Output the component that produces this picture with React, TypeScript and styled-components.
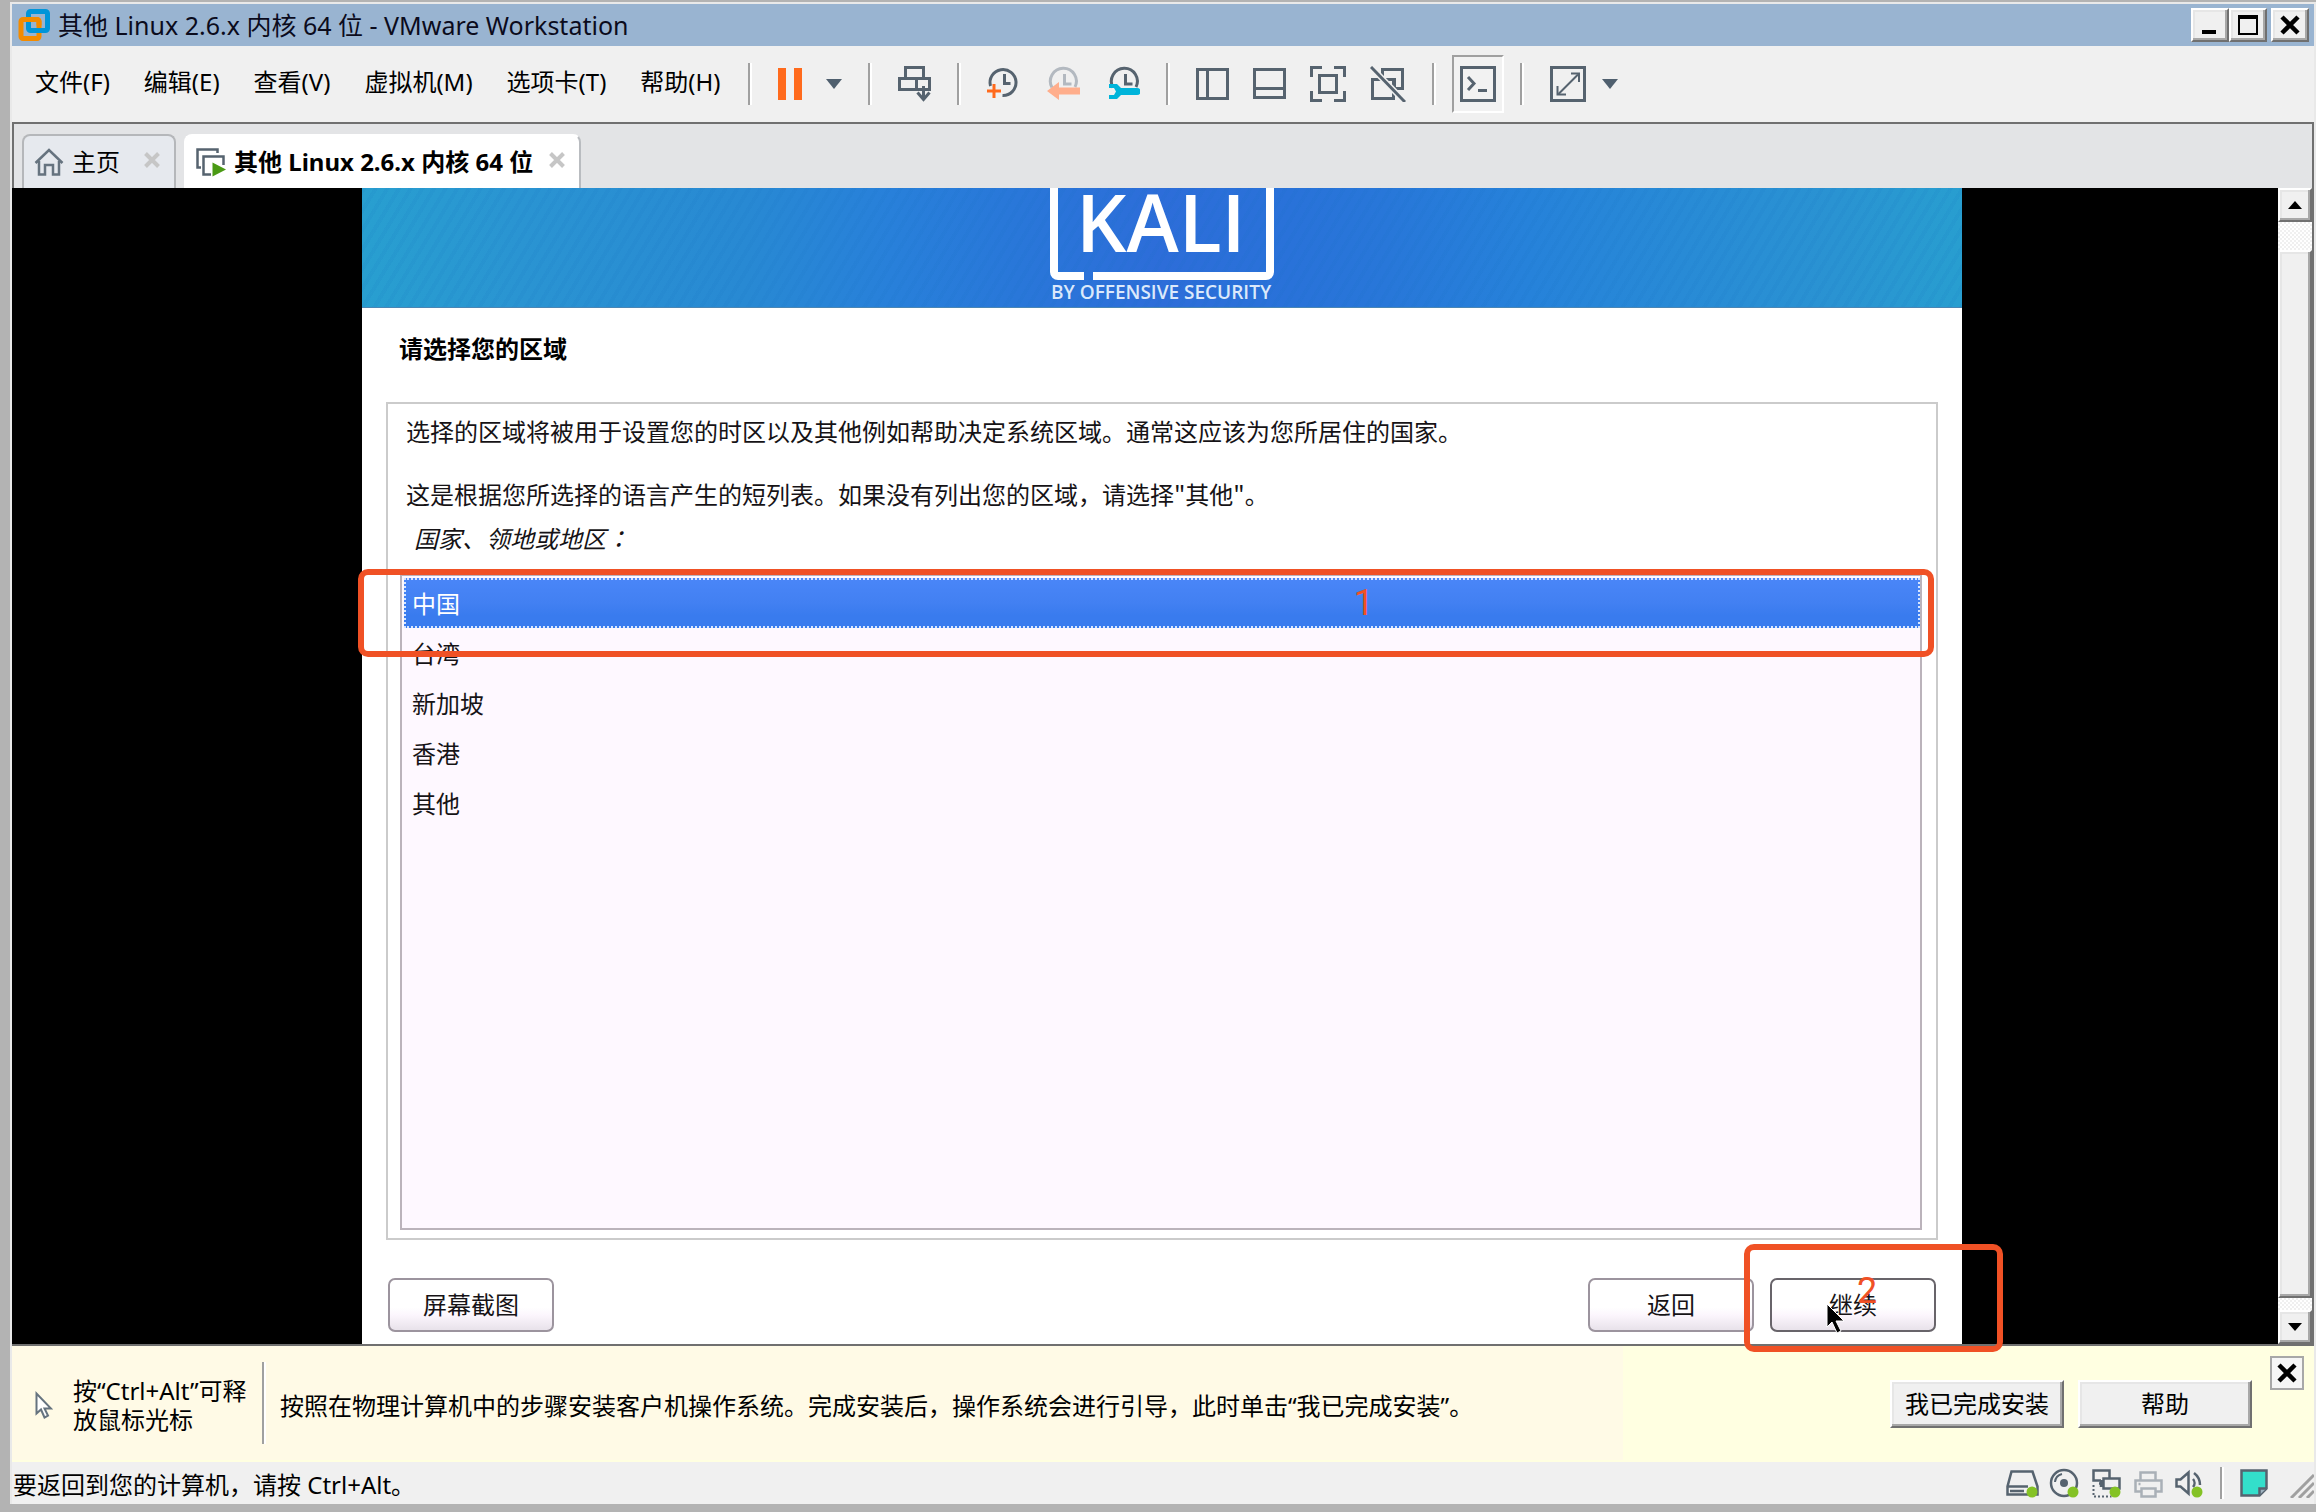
import React, { useState } from 'react';
import styled, { createGlobalStyle, css } from 'styled-components';

const ui = `"Noto Sans", "Noto Sans CJK SC", sans-serif`;
const cjk = `"Noto Sans CJK SC", "Noto Sans", sans-serif`;

const Global = createGlobalStyle`
  * { box-sizing: border-box; }
  html, body { margin: 0; padding: 0; }
  body { background: #b3b3b3; font-family: ${ui}; font-size: 24px; color: #000; }
  button { font: inherit; color: inherit; cursor: default; }
`;

const raised = css`
  background: #f0f0f0;
  border: 2px solid;
  border-color: #fff #707070 #707070 #fff;
  box-shadow: inset -2px -2px 0 #a8a8a8, inset 2px 2px 0 #e6e6e6;
`;

const Desktop = styled.div`
  min-height: 100vh;
  display: flex;
  flex-direction: column;
  padding: 2px 0 8px 10px;
  background: #b3b3b3;
`;

const Window = styled.div`
  flex: 1;
  display: flex;
  flex-direction: column;
  background: #f0f0f0;
  border: 2px solid #e9e9e9;
  border-bottom: 0;
`;

/* ---- title bar ---- */

const TitleBar = styled.header`
  height: 42px;
  display: flex;
  align-items: center;
  gap: 7px;
  padding: 0 5px 0 5px;
  background: #99b4d1;
`;

const TitleText = styled.h1`
  flex: 1;
  margin: 0;
  font-size: 25px;
  font-weight: 400;
  line-height: 32px;
  color: #0b0b1c;
`;

const WindowButtons = styled.div`
  display: flex;
`;

const WindowButton = styled.button<{ $apart?: boolean }>`
  ${raised}
  width: 38px;
  height: 34px;
  padding: 0;
  margin-left: ${p => (p.$apart ? '4px' : '0')};
  display: flex;
  align-items: center;
  justify-content: center;
`;

/* ---- menu and tool bar ---- */

const MenuBar = styled.div`
  height: 76px;
  display: flex;
  align-items: center;
  padding-left: 6px;
`;

const MenuItem = styled.button`
  padding: 0 17px 4px;
  border: 0;
  background: none;
  line-height: 32px;
  white-space: nowrap;
`;

const Tools = styled.div`
  display: flex;
  align-items: center;
  padding-left: 10px;
`;

const Separator = styled.span<{ $height: number }>`
  width: 4px;
  height: ${p => p.$height}px;
  flex: none;
  background: linear-gradient(90deg, #a0a0a0 50%, #fff 50%);
`;

const ToolGroup = styled.div<{ $gap?: number }>`
  display: flex;
  align-items: center;
  gap: ${p => p.$gap ?? 24}px;
  padding: 0 26px;
`;

const IconButton = styled.button<{ $on?: boolean }>`
  display: flex;
  padding: 0;
  border: 0;
  background: none;
  ${p =>
    p.$on &&
    css`
      margin: 0 -10px;
      padding: 9px 6px;
      border: 2px solid;
      border-color: #a0a0a0 #fff #fff #a0a0a0;
      background: #f2f2f2;
    `}
`;

/* ---- tabs ---- */

const Client = styled.div`
  flex: 1;
  display: flex;
  flex-direction: column;
  border: 2px solid #707070;
  border-width: 2px 2px 2px 0;
`;

const Tabs = styled.nav`
  height: 64px;
  display: flex;
  align-items: flex-end;
  gap: 8px;
  padding-left: 8px;
  background: #e3e4e6;
  border-left: 2px solid #707070;
`;

const Tab = styled.div<{ $active?: boolean }>`
  min-width: 154px;
  height: 54px;
  display: flex;
  align-items: center;
  gap: 16px;
  padding: 0 14px 0 10px;
  border: 2px solid;
  border-color: ${p => (p.$active ? '#fff #b9bcc0 #fff #fff' : '#b5b7ba')};
  border-bottom: 0;
  border-radius: 8px 8px 0 0;
  background: ${p => (p.$active ? '#fff' : '#e6e9ee')};
  font-weight: ${p => (p.$active ? 700 : 400)};
`;

const TabLabel = styled.button`
  display: flex;
  align-items: center;
  gap: 8px;
  padding: 0;
  border: 0;
  background: none;
  font-weight: inherit;
  line-height: 32px;
  white-space: nowrap;
`;

const TabClose = styled.button`
  display: flex;
  padding: 0 0 4px;
  margin-left: auto;
  border: 0;
  background: none;
`;

/* ---- guest display ---- */

const Stage = styled.div`
  flex: 1;
  display: flex;
  background: #000;
  border-left: 2px solid #000;
`;

const Display = styled.main`
  flex: 1;
  display: grid;
  grid-template-columns: 348fr 1600fr 316fr;
`;

const Guest = styled.section`
  grid-column: 2;
  display: flex;
  flex-direction: column;
  background: #fff;
  font-family: ${cjk};
`;

const Banner = styled.div`
  height: 120px;
  display: flex;
  justify-content: center;
  border-bottom: 1px solid #4a86b4;
  background:
    repeating-linear-gradient(121deg, rgba(20, 110, 190, 0.09) 0 4px, transparent 4px 10px),
    linear-gradient(90deg, #289fd0, #2a94d2 10%, #2889d3 24%, #2880da 33%, #2977d9 41%, #2d6dd9 50%, #2972d9 58%, #2877d9 64%, #2682da 73%, #2a93d2 92%, #289ed0);
`;

const Heading = styled.h2`
  margin: 0;
  padding: 24px 37px 38px;
  font-size: 24px;
  font-weight: 700;
  line-height: 32px;
`;

const Panel = styled.div`
  flex: 1;
  display: flex;
  flex-direction: column;
  margin: 0 24px;
  padding: 11px 14px 8px 12px;
  border: 2px solid #cbcbcb;
`;

const Text = styled.p<{ $after: number }>`
  margin: 0 6px ${p => p.$after}px;
  line-height: 32px;
  color: #161316;
`;

const ListTitle = styled.p`
  margin: 0 14px 20px;
  line-height: 32px;
  font-style: italic;
  color: #161316;
`;

const Colon = styled.span`
  font-family: "Noto Sans CJK JP", sans-serif;
`;

const List = styled.div`
  flex: 1;
  position: relative;
  padding: 2px 0 2px 2px;
  border: 2px solid #bbb3bb;
  background: #fef8ff;
`;

const Row = styled.label<{ $selected: boolean }>`
  height: 50px;
  display: flex;
  align-items: center;
  padding: 0 0 2px 6px;
  border: 2px dotted transparent;
  color: #161316;
  ${p =>
    p.$selected &&
    css`
      color: #fff;
      border-color: #d7e6ff;
      background: linear-gradient(#4a86f8, #4280f2 50%, #397bee 75%, #397bee) border-box;
    `}
`;

const Radio = styled.input`
  appearance: none;
  width: 0;
  height: 0;
  margin: 0;
  outline: none;
`;

const Footer = styled.div`
  display: flex;
  gap: 16px;
  padding: 38px 26px 12px;
`;

const GuestButton = styled.button<{ $focus?: boolean }>`
  width: 166px;
  height: 54px;
  padding: 0 0 2px;
  border: 2px solid ${p => (p.$focus ? '#68646a' : '#9c949e')};
  border-radius: 7px;
  background: linear-gradient(#fff 55%, #fcf6fd 70%, #e8e2ea);
  line-height: 32px;
  color: #161316;
`;

const Spacer = styled.span`
  flex: 1;
`;

/* ---- markers drawn over the display ---- */

const Anchor = styled.div`
  position: relative;
`;

const Marker = styled.div`
  position: absolute;
  z-index: 2;
  border: 6px solid #f05125;
  border-radius: 10px;
  pointer-events: none;
`;

const RowMarker = styled(Marker)`
  top: -7px;
  left: -44px;
  right: -14px;
  height: 88px;
`;

const ButtonMarker = styled(Marker)`
  top: -34px;
  left: -26px;
  right: -67px;
  bottom: -20px;
`;

const Digit = styled.span<{ $x: string; $y: string }>`
  position: absolute;
  z-index: 2;
  left: ${p => p.$x};
  top: ${p => p.$y};
  font-family: Roboto, sans-serif;
  font-size: 36px;
  font-weight: 400;
  line-height: 36px;
  color: #f05125;
  pointer-events: none;
`;

const Pointer = styled.svg`
  position: absolute;
  z-index: 1;
  left: 56px;
  top: 25px;
`;

/* ---- scroll bar ---- */

const ScrollBar = styled.div`
  width: 34px;
  display: flex;
  flex-direction: column;
  background: repeating-conic-gradient(#fff 0 25%, #f0f0f0 0 50%) 0 0 / 4px 4px;
`;

const ScrollButton = styled.button`
  ${raised}
  height: 34px;
  padding: 0;
  display: flex;
  align-items: center;
  justify-content: center;
`;

const ScrollTrack = styled.div`
  flex: 1;
  display: flex;
  padding: 28px 0 12px;
`;

const Thumb = styled.div`
  ${raised}
  flex: 1;
`;

/* ---- tip bar ---- */

const TipBar = styled.div`
  height: 116px;
  display: flex;
  align-items: center;
  padding: 0 10px 0 0;
  background: linear-gradient(90deg, #fffae6 70%, #ffffe1 70%);
  border-bottom: 2px solid #ffffe1;
`;

const TipCursor = styled.div`
  display: flex;
  padding: 4px 20px 0 23px;
`;

const ReleaseTip = styled.p`
  width: 189px;
  margin: 4px 0 0;
  line-height: 29px;
`;

const InstallTip = styled.p`
  flex: 1;
  margin: 6px 0 0 14px;
  line-height: 32px;
`;

const TipButtons = styled.div`
  display: flex;
  gap: 14px;
  padding-top: 2px;
`;

const TipButton = styled.button`
  ${raised}
  width: 174px;
  height: 48px;
  padding: 0;
  line-height: 32px;
`;

const TipClose = styled.button`
  align-self: flex-start;
  width: 34px;
  height: 34px;
  margin: 10px 0 0 18px;
  padding: 0;
  display: flex;
  align-items: center;
  justify-content: center;
  border: 2px solid #a8a8a8;
  background: #f6f6f6;
`;

/* ---- status bar ---- */

const StatusBar = styled.footer`
  height: 42px;
  display: flex;
  align-items: center;
  background: #f0f0f0;
`;

const StatusText = styled.span`
  flex: 1;
  padding: 4px 0 0 1px;
  line-height: 32px;
`;

const Devices = styled.div`
  display: flex;
  align-items: center;
  gap: 10px;
  padding-right: 15px;
`;

const Note = styled.div`
  display: flex;
  align-items: flex-end;
  gap: 22px;
  padding-left: 16px;
`;

/* ---- drawings ---- */

const ink = '#56636f';

const Icon = ({ w = 36, h = 36, children }: { w?: number; h?: number; children: React.ReactNode }) => (
  <svg width={w} height={h} viewBox={`0 0 ${w} ${h}`} fill="none" stroke={ink} strokeWidth="3" aria-hidden="true">
    {children}
  </svg>
);

const AppLogo = () => (
  <svg width="34" height="34" viewBox="0 0 34 34" fill="none" strokeWidth="5" aria-hidden="true">
    <rect x="4" y="11.5" width="18" height="19" rx="2" stroke="#f38b00" />
    <rect x="11.5" y="3.5" width="19" height="19" rx="2" stroke="#0095d9" />
    <path d="M9 11.5h11a2 2 0 0 1 2 2v4" stroke="#f38b00" />
  </svg>
);

const Caret = () => (
  <svg width="16" height="10" viewBox="0 0 16 10" aria-hidden="true">
    <path d="M0 0h16L8 10z" fill="#4f5f6e" />
  </svg>
);

const Pause = () => (
  <svg width="24" height="32" viewBox="0 0 24 32" fill="#ff6a1c" aria-hidden="true">
    <path d="M0 0h8v32H0zM16 0h8v32h-8z" />
  </svg>
);

const SendKeys = () => (
  <Icon w={33} h={36}>
    <path d="M7.5 12.5v-11h18v11M1.5 12.5h30v11h-30zM18.5 12.5v11" />
    <path d="M25.5 20v13M19.5 26.5l6 7 6-7" />
  </Icon>
);

const Clock = ({ faded = false }: { faded?: boolean }) => (
  <g stroke={faded ? '#b3b9c0' : ink}>
    <path d="M5 21.5A13 13 0 1 1 28 21" />
    <path d="M17.5 8v10h7" />
  </g>
);

const TakeSnapshot = () => (
  <Icon w={32} h={36}>
    <path d="M3.5 20A13 13 0 1 1 15.5 29.5" />
    <path d="M17.5 8v9.5h6" />
    <path d="M7 18v14M0 25h14" stroke="#ff6a1c" />
  </Icon>
);

const Revert = () => (
  <Icon w={33} h={36}>
    <Clock faded />
    <path d="M0 25l12-9v5.5h21v7H12V34z" fill="#ffae8c" stroke="none" />
  </Icon>
);

const Manage = () => (
  <Icon w={32} h={36}>
    <Clock />
    <path d="M1 18h8l4 4h16a3 3 0 0 1 0 7H13l-4 4H1v-4h5l2-3.5L6 22H1z" fill="#00b4da" stroke="none" />
  </Icon>
);

const Library = () => (
  <Icon w={33} h={36}>
    <rect x="1.5" y="3.5" width="30" height="29" />
    <path d="M11.5 4v28" />
  </Icon>
);

const Thumbnails = () => (
  <Icon w={33} h={36}>
    <rect x="1.5" y="3.5" width="30" height="28" />
    <path d="M1.5 22.5h30" />
  </Icon>
);

const Stretch = () => (
  <Icon>
    <path d="M1.5 11V1.5H12M24 1.5h10.5V11M34.5 25v9.5H24M12 34.5H1.5V25" />
    <rect x="9.5" y="9.5" width="17" height="17" />
  </Icon>
);

const NoUnity = () => (
  <Icon>
    <path d="M12.5 10V3.5h20v19h-8M2.5 13.5h21v19h-21zM17.5 13.5h7v10" />
    <path d="M1 1l34 35" stroke="#f0f0f0" strokeWidth="6" />
    <path d="M1 1l34 35" />
  </Icon>
);

const Console = () => (
  <Icon>
    <rect x="1.5" y="1.5" width="33" height="33" />
    <path d="M8 11l6 6.5-6 6.5M18 24.5h9" />
  </Icon>
);

const FullScreen = () => (
  <Icon>
    <rect x="1.5" y="1.5" width="33" height="33" />
    <g strokeWidth="2">
      <path d="M21 7.5h8V16M7.5 20v8.5H16" />
      <path d="M28 8.5L8.5 28" />
    </g>
  </Icon>
);

const Home = () => (
  <svg width="30" height="28" viewBox="0 0 30 28" fill="none" stroke="#66737f" strokeWidth="2.5" aria-hidden="true">
    <path d="M1.5 15L15 2l13.5 13M5 13v13.5h6V17h8v9.5h6V13" />
  </svg>
);

const Machine = () => (
  <svg width="30" height="30" viewBox="0 0 30 30" fill="none" stroke={ink} strokeWidth="2.5" aria-hidden="true">
    <path d="M5 20.5H1.5v-18h20V6" />
    <path d="M15 27.5H7.5v-18h20V18" />
    <path d="M16.5 15.5L30 22.5 16.5 29.5z" fill="#4a9a14" stroke="none" />
  </svg>
);

const Cross = () => (
  <svg width="16" height="16" viewBox="0 0 16 16" stroke="#c6c6c6" strokeWidth="4" aria-hidden="true">
    <path d="M1.5 1.5l13 13M14.5 1.5l-13 13" />
  </svg>
);

const BlackCross = () => (
  <svg width="20" height="20" viewBox="0 0 20 20" stroke="#000" strokeWidth="4.5" aria-hidden="true">
    <path d="M2 2l16 16M18 2L2 18" />
  </svg>
);

const KaliLogo = () => (
  <svg width="224" height="119" viewBox="0 0 224 119" fill="none" role="img" aria-label="KALI by Offensive Security">
    <path d="M4 0v84a4 4 0 0 0 4 4h26M43 88h173a4 4 0 0 0 4-4V0" stroke="#fff" strokeWidth="8" />
    <text x="26" y="64" fill="#fff" fontFamily="Open Sans, sans-serif" fontSize="79" fontWeight="600">
      KALI
    </text>
    <text x="1" y="111" fill="#dbe9fb" fontFamily="Open Sans, sans-serif" fontSize="19" fontWeight="600">
      BY OFFENSIVE SECURITY
    </text>
  </svg>
);

const Dot = ({ x, y }: { x: number; y: number }) => <circle cx={x} cy={y} r="5.5" fill="#84c225" stroke="none" />;

const Small = ({ w = 32, children, color = ink }: { w?: number; color?: string; children: React.ReactNode }) => (
  <svg width={w} height="30" viewBox={`0 0 ${w} 30`} fill="none" stroke={color} strokeWidth="2.5" aria-hidden="true">
    {children}
  </svg>
);

const Disk = () => (
  <Small w={33}>
    <path d="M5.5 3.5h21l5 15v8H1.5v-8zM2 18.5h20M4 23h14" />
    <Dot x={26} y={24} />
  </Small>
);

const Disc = () => (
  <Small>
    <circle cx="15" cy="15" r="13" />
    <circle cx="15" cy="15" r="4" fill={ink} stroke="none" />
    <path d="M6 14a9 9 0 0 1 7-8" strokeWidth="2" />
    <Dot x={24} y={24} />
  </Small>
);

const Network = () => (
  <Small>
    <path d="M10 12.5H2.5v-10h16v8M12.5 10.5h16v10h-16zM8 15.5h5M10 12v7" />
    <path d="M2.5 17v11.5h18" strokeDasharray="2 2" strokeWidth="2" />
    <Dot x={24} y={24} />
  </Small>
);

const Printer = () => (
  <Small color="#a9b0b7">
    <path d="M7.5 12V4.5h15V12M7.5 23.5h-5v-11h26v11h-5M8.5 20.5h14v8h-14zM5.5 16h2" />
  </Small>
);

const Sound = () => (
  <Small w={30}>
    <path d="M13.5 4.5v21l-8-7h-4v-7h4zM18 11a6 6 0 0 1 0 8M19 5c4 3 6 6 6 12" />
    <Dot x={22} y={24} />
  </Small>
);

const menus = ['文件(F)', '编辑(E)', '查看(V)', '虚拟机(M)', '选项卡(T)', '帮助(H)'];
const regions = ['中国', '台湾', '新加坡', '香港', '其他'];

export default function App() {
  const [region, setRegion] = useState('中国');
  return (
    <>
      <Global />
      <Desktop>
        <Window>
          <TitleBar>
            <AppLogo />
            <TitleText>其他 Linux 2.6.x 内核 64 位 - VMware Workstation</TitleText>
            <WindowButtons>
              <WindowButton aria-label="最小化">
                <svg width="20" height="20" viewBox="0 0 20 20" aria-hidden="true">
                  <path d="M2 15h14v4H2z" />
                </svg>
              </WindowButton>
              <WindowButton aria-label="最大化">
                <svg width="20" height="20" viewBox="0 0 20 20" aria-hidden="true">
                  <path d="M0 0h20v20H0zM2 4v14h16V4z" fillRule="evenodd" />
                </svg>
              </WindowButton>
              <WindowButton aria-label="关闭" $apart>
                <BlackCross />
              </WindowButton>
            </WindowButtons>
          </TitleBar>

          <MenuBar>
            {menus.map(m => (
              <MenuItem key={m}>{m}</MenuItem>
            ))}
            <Tools>
              <Separator $height={42} />
              <ToolGroup>
                <IconButton aria-label="挂起"><Pause /></IconButton>
                <IconButton aria-label="电源选项"><Caret /></IconButton>
              </ToolGroup>
              <Separator $height={42} />
              <ToolGroup>
                <IconButton aria-label="发送 Ctrl+Alt+Del"><SendKeys /></IconButton>
              </ToolGroup>
              <Separator $height={42} />
              <ToolGroup $gap={28}>
                <IconButton aria-label="拍摄快照"><TakeSnapshot /></IconButton>
                <IconButton aria-label="恢复快照"><Revert /></IconButton>
                <IconButton aria-label="管理快照"><Manage /></IconButton>
              </ToolGroup>
              <Separator $height={42} />
              <ToolGroup>
                <IconButton aria-label="显示库"><Library /></IconButton>
                <IconButton aria-label="显示缩略图"><Thumbnails /></IconButton>
                <IconButton aria-label="拉伸客户机"><Stretch /></IconButton>
                <IconButton aria-label="Unity"><NoUnity /></IconButton>
              </ToolGroup>
              <Separator $height={42} />
              <ToolGroup>
                <IconButton aria-label="控制台视图" $on><Console /></IconButton>
              </ToolGroup>
              <Separator $height={42} />
              <ToolGroup $gap={16}>
                <IconButton aria-label="全屏"><FullScreen /></IconButton>
                <IconButton aria-label="全屏选项"><Caret /></IconButton>
              </ToolGroup>
            </Tools>
          </MenuBar>

          <Client>
            <Tabs>
              <Tab>
                <TabLabel><Home />主页</TabLabel>
                <TabClose aria-label="关闭主页"><Cross /></TabClose>
              </Tab>
              <Tab $active>
                <TabLabel><Machine />其他 Linux 2.6.x 内核 64 位</TabLabel>
                <TabClose aria-label="关闭标签"><Cross /></TabClose>
              </Tab>
            </Tabs>

            <Stage>
              <Display>
                <Guest>
                  <Banner><KaliLogo /></Banner>
                  <Heading>请选择您的区域</Heading>
                  <Panel>
                    <Text $after={31}>选择的区域将被用于设置您的时区以及其他例如帮助决定系统区域。通常这应该为您所居住的国家。</Text>
                    <Text $after={12}>这是根据您所选择的语言产生的短列表。如果没有列出您的区域，请选择"其他"。</Text>
                    <ListTitle id="regions">国家、领地或地区<Colon>：</Colon></ListTitle>
                    <List role="radiogroup" aria-labelledby="regions">
                      {regions.map(r => (
                        <Row key={r} $selected={r === region}>
                          <Radio type="radio" name="region" checked={r === region} onChange={() => setRegion(r)} />
                          {r}
                        </Row>
                      ))}
                      <RowMarker />
                      <Digit $x="62.7%" $y="9px">1</Digit>
                    </List>
                  </Panel>
                  <Footer>
                    <GuestButton>屏幕截图</GuestButton>
                    <Spacer />
                    <GuestButton>返回</GuestButton>
                    <Anchor>
                      <GuestButton $focus>继续</GuestButton>
                      <Pointer width="20" height="32" viewBox="0 0 20 32" aria-hidden="true">
                        <path d="M1 1v23l5-5 5 11 4-2-5-10h8z" fill="#000" stroke="#fff" strokeWidth="1" />
                      </Pointer>
                      <ButtonMarker />
                      <Digit $x="87px" $y="-5px">2</Digit>
                    </Anchor>
                  </Footer>
                </Guest>
              </Display>
              <ScrollBar>
                <ScrollButton aria-label="向上滚动">
                  <svg width="14" height="8" viewBox="0 0 14 8" aria-hidden="true"><path d="M0 8L7 0l7 8z" /></svg>
                </ScrollButton>
                <ScrollTrack><Thumb /></ScrollTrack>
                <ScrollButton aria-label="向下滚动">
                  <svg width="14" height="8" viewBox="0 0 14 8" aria-hidden="true"><path d="M0 0h14L7 8z" /></svg>
                </ScrollButton>
              </ScrollBar>
            </Stage>
          </Client>

          <TipBar>
            <TipCursor>
              <svg width="18" height="28" viewBox="0 0 18 28" fill="#fff" stroke="#66737f" strokeWidth="2" aria-hidden="true">
                <path d="M1.5 2.5v20l4.5-4 3.5 8 3.5-2-3.5-7h6.5z" />
              </svg>
            </TipCursor>
            <ReleaseTip>按“Ctrl+Alt”可释<br />放鼠标光标</ReleaseTip>
            <Separator $height={82} />
            <InstallTip>按照在物理计算机中的步骤安装客户机操作系统。完成安装后，操作系统会进行引导，此时单击“我已完成安装”。</InstallTip>
            <TipButtons>
              <TipButton>我已完成安装</TipButton>
              <TipButton>帮助</TipButton>
            </TipButtons>
            <TipClose aria-label="关闭提示"><BlackCross /></TipClose>
          </TipBar>

          <StatusBar>
            <StatusText>要返回到您的计算机，请按 Ctrl+Alt。</StatusText>
            <Devices>
              <Disk />
              <Disc />
              <Network />
              <Printer />
              <Sound />
            </Devices>
            <Separator $height={32} />
            <Note>
              <svg width="28" height="30" viewBox="0 0 28 30" fill="#33dfcb" stroke={ink} strokeWidth="2.5" aria-hidden="true">
                <path d="M1.5 2.5h25v18l-7 7h-18z" />
                <path d="M19.5 27v-6.5h7" fill="#9fb3c0" />
              </svg>
              <svg width="24" height="24" viewBox="0 0 24 24" stroke="#a0a0a0" strokeWidth="3" aria-hidden="true">
                <path d="M1 24L24 1M9 24L24 9M17 24l7-7" />
              </svg>
            </Note>
          </StatusBar>
        </Window>
      </Desktop>
    </>
  );
}
